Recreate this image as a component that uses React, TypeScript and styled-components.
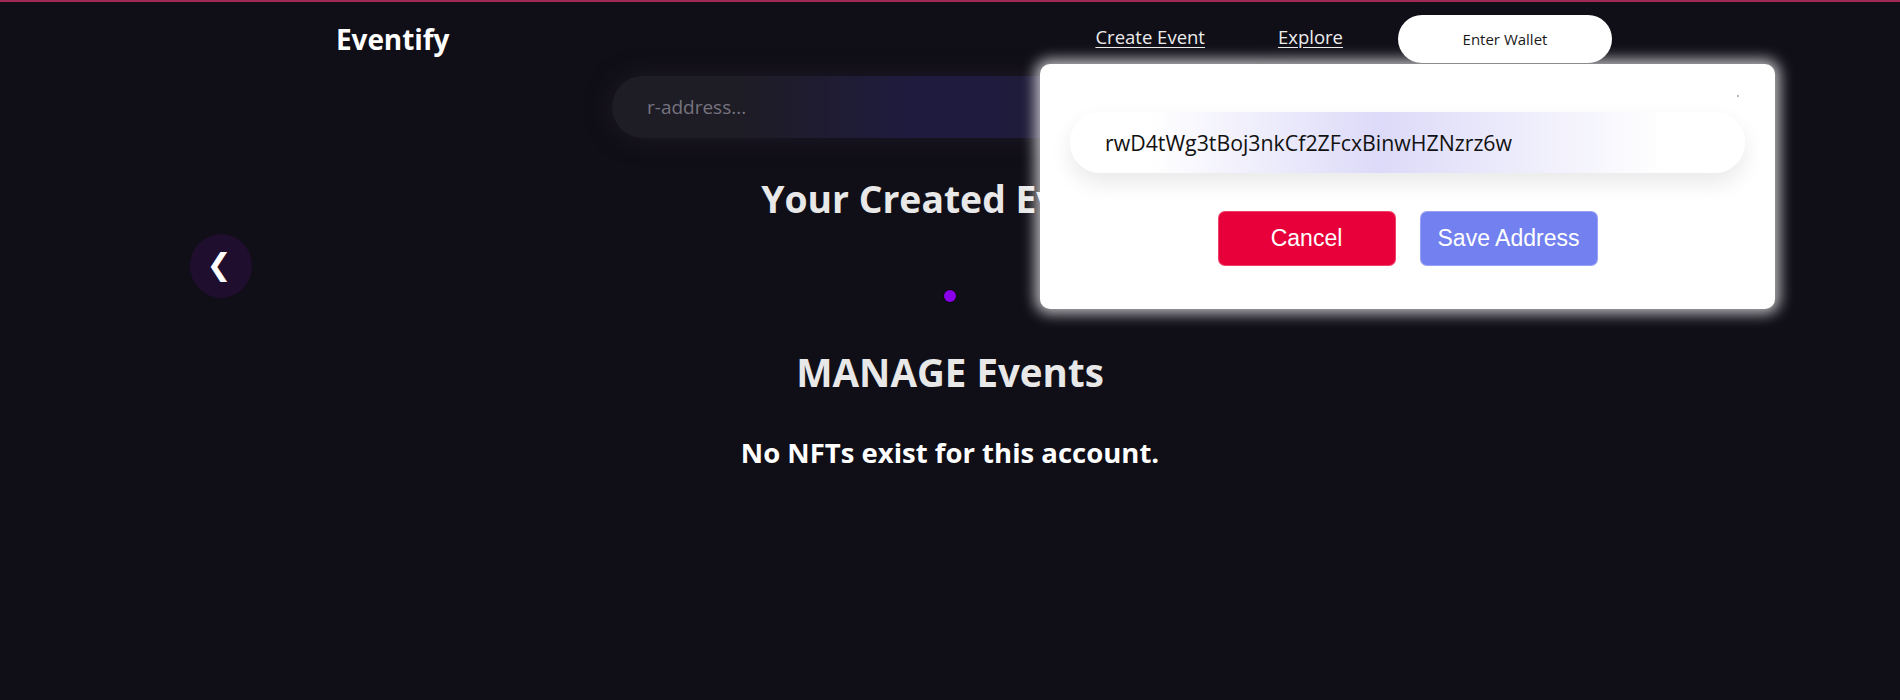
import React from "react";
import styled, { createGlobalStyle } from "styled-components";

const GlobalStyle = createGlobalStyle`
  html, body {
    margin: 0;
    padding: 0;
    background: #100e17;
  }
  body {
    border-top: 2px solid #a02a55;
    font-family: "Open Sans", "Noto Sans", sans-serif;
    color: #ffffff;
    min-height: 698px;
  }
  * { box-sizing: border-box; }
`;

const Page = styled.div`
  position: relative;
  width: 1900px;
  min-height: 698px;
`;

const Header = styled.header`
  display: flex;
  align-items: center;
  justify-content: space-between;
  height: 61px;
  padding: 13px 288px 0 336px;
`;

const Logo = styled.div`
  font-size: 28px;
  font-weight: 700;
  color: #ffffff;
  letter-spacing: -0.1px;
`;

const Nav = styled.nav`
  display: flex;
  align-items: center;
`;

const NavLink = styled.a<{ $gap: number }>`
  font-size: 18.5px;
  color: #ececec;
  text-decoration: underline;
  text-underline-offset: 3px;
  margin-right: ${(p) => p.$gap}px;
  margin-bottom: 5px;
  cursor: pointer;
`;

const WalletButton = styled.button`
  width: 214px;
  height: 48px;
  border: none;
  border-radius: 24px;
  background: #ffffff;
  color: #1a1a1a;
  font-family: "Open Sans", sans-serif;
  font-size: 15px;
`;

const Main = styled.main`
  display: flex;
  flex-direction: column;
  align-items: center;
`;

const SearchInput = styled.input`
  width: 676px;
  height: 62px;
  margin-top: 13px;
  border: none;
  outline: none;
  border-radius: 31px;
  padding-left: 35px;
  font-family: "Open Sans", sans-serif;
  font-size: 19px;
  color: #d0d0d0;
  background: linear-gradient(90deg, #1e1c24 18%, #1f1b3f 45%, #1f1b3f 55%, #1e1c24 82%);
  box-shadow: 0 0 24px rgba(40, 36, 52, 0.6);
  &::placeholder {
    color: #767480;
  }
`;

const Title = styled.h2<{ $size: number; $top: number }>`
  margin: ${(p) => p.$top}px 0 0;
  font-size: ${(p) => p.$size}px;
  font-weight: 700;
  line-height: 48px;
  color: #e8e8e8;
`;

const CarouselRow = styled.div`
  width: 100%;
  display: flex;
  align-items: flex-end;
  justify-content: space-between;
  padding: 0 190px;
  margin-top: 11px;
`;

const ArrowButton = styled.button`
  width: 62px;
  height: 64px;
  border-radius: 50%;
  border: none;
  background: #1f0e2e;
  color: #ffffff;
  font-family: "DejaVu Sans", sans-serif;
  font-size: 30px;
  line-height: 1;
  display: flex;
  align-items: center;
  justify-content: center;
  padding: 0 4px 2px 0;
  margin-bottom: 4px;
`;

const Dots = styled.div`
  display: flex;
  gap: 8px;
`;

const Dot = styled.span<{ $active?: boolean }>`
  width: 12px;
  height: 12px;
  border-radius: 50%;
  background: ${(p) => (p.$active ? "#8a00ea" : "#444")};
  box-shadow: 0 0 0 1px rgba(0, 0, 0, 0.4);
`;

const EmptyText = styled.p`
  margin: 38px 0 0;
  font-size: 27.5px;
  font-weight: 700;
  color: #ffffff;
`;

const Modal = styled.div`
  position: absolute;
  top: 62px;
  left: 1040px;
  width: 735px;
  padding: 48px 30px 43px;
  background: #ffffff;
  border-radius: 10px;
  box-shadow: 0 0 14px 5px rgba(255, 255, 255, 0.7);
  display: flex;
  flex-direction: column;
`;

const CloseDot = styled.span`
  position: absolute;
  top: 31px;
  right: 36px;
  width: 2px;
  height: 2px;
  background: #b8b8b8;
`;

const AddressInput = styled.input`
  width: 100%;
  height: 61px;
  border: none;
  outline: none;
  border-radius: 31px;
  padding-left: 35px;
  font-family: "Open Sans", sans-serif;
  font-size: 21.3px;
  color: #111111;
  background: linear-gradient(90deg, #ffffff 12%, #dcdaf8 46%, #ffffff 88%);
  box-shadow: 0 10px 22px rgba(0, 0, 0, 0.09);
`;

const ButtonRow = styled.div`
  display: flex;
  justify-content: center;
  gap: 24px;
  margin-top: 38px;
`;

const ActionButton = styled.button<{ $bg: string }>`
  width: 178px;
  height: 55px;
  border: 1px solid rgba(255, 255, 255, 0.25);
  border-radius: 7px;
  background: ${(p) => p.$bg};
  color: #ffffff;
  font-family: "Liberation Sans", Arial, sans-serif;
  font-size: 23px;
`;

export default function App() {
  return (
    <Page>
      <GlobalStyle />
      <Header>
        <Logo>Eventify</Logo>
        <Nav>
          <NavLink $gap={73}>Create Event</NavLink>
          <NavLink $gap={55}>Explore</NavLink>
          <WalletButton>Enter Wallet</WalletButton>
        </Nav>
      </Header>
      <Main>
        <SearchInput placeholder="r-address..." />
        <Title $size={37.3} $top={37}>Your Created Events</Title>
        <CarouselRow>
          <ArrowButton>❮</ArrowButton>
          <Dots>
            <Dot $active />
          </Dots>
          <ArrowButton>❯</ArrowButton>
        </CarouselRow>
        <Title $size={38.5} $top={46}>MANAGE Events</Title>
        <EmptyText>No NFTs exist for this account.</EmptyText>
      </Main>
      <Modal>
        <CloseDot />
        <AddressInput defaultValue="rwD4tWg3tBoj3nkCf2ZFcxBinwHZNzrz6w" />
        <ButtonRow>
          <ActionButton $bg="#e8003a">Cancel</ActionButton>
          <ActionButton $bg="#7381f0">Save Address</ActionButton>
        </ButtonRow>
      </Modal>
    </Page>
  );
}
